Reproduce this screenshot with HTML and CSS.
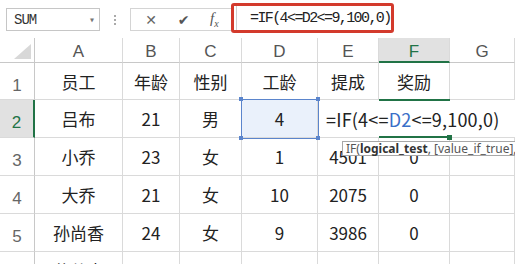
FILE: index.html
```html
<!DOCTYPE html>
<html lang="zh-CN">
<head>
  <meta charset="UTF-8">
  <title>奖励公式</title>
  <link rel="stylesheet" href="styles.css">
</head>
<body>
  <div class="toolbar">
    <div class="namebox"><span>SUM</span><span class="arrow">▾</span></div>
    <div class="grip"><i></i><i></i><i></i></div>
    <div class="fxbtns">
      <span class="cancel">✕</span>
      <span class="ok">✔</span>
      <span class="fx">f<sub>x</sub></span>
    </div>
    <div class="formula-box">=IF(4&lt;=D2&lt;=9,100,0)</div>
  </div>

  <div class="sheet">
    <!-- column headers -->
    <div class="corner"><div class="tri"></div></div>
    <div class="colhead">A</div>
    <div class="colhead">B</div>
    <div class="colhead">C</div>
    <div class="colhead">D</div>
    <div class="colhead">E</div>
    <div class="colhead active-col">F</div>
    <div class="colhead">G</div>

    <!-- row 1 -->
    <div class="rowhead">1</div>
    <div class="cell">员工</div>
    <div class="cell">年龄</div>
    <div class="cell">性别</div>
    <div class="cell">工龄</div>
    <div class="cell">提成</div>
    <div class="cell">奖励</div>
    <div class="cell"></div>

    <!-- row 2 -->
    <div class="rowhead active-row">2</div>
    <div class="cell">吕布</div>
    <div class="cell">21</div>
    <div class="cell">男</div>
    <div class="cell sel">4
      <i class="h tl"></i><i class="h tr"></i><i class="h bl"></i><i class="h br"></i>
    </div>
    <div class="cell editor">=IF(4&lt;=<span class="ref">D2</span>&lt;=9,100,0)</div>

    <!-- row 3 -->
    <div class="rowhead">3</div>
    <div class="cell">小乔</div>
    <div class="cell">23</div>
    <div class="cell">女</div>
    <div class="cell">1</div>
    <div class="cell">4501</div>
    <div class="cell">0</div>
    <div class="cell"></div>

    <!-- row 4 -->
    <div class="rowhead">4</div>
    <div class="cell">大乔</div>
    <div class="cell">21</div>
    <div class="cell">女</div>
    <div class="cell">10</div>
    <div class="cell">2075</div>
    <div class="cell">0</div>
    <div class="cell"></div>

    <!-- row 5 -->
    <div class="rowhead">5</div>
    <div class="cell">孙尚香</div>
    <div class="cell">24</div>
    <div class="cell">女</div>
    <div class="cell">9</div>
    <div class="cell">3986</div>
    <div class="cell">0</div>
    <div class="cell"></div>

    <!-- row 6 (cut off) -->
    <div class="rowhead">6</div>
    <div class="cell">黄蕉青</div>
    <div class="cell">25</div>
    <div class="cell">男</div>
    <div class="cell">5</div>
    <div class="cell">3000</div>
    <div class="cell">100</div>
    <div class="cell"></div>

    <div class="active-cell"><i class="fill"></i></div>
    <div class="tip">IF(<b>logical_test</b>, [value_if_true], [value_if_false])</div>
  </div>
</body>
</html>
```

FILE: styles.css
```css
:root {
  --grid: #dadada;
  --head-line: #c8c8c8;
  --green: #217346;
  --sel-blue: #5b85cc;
}

body {
  margin: 0;
  width: 515px;
  height: 264px;
  overflow: hidden;
  background: #fff;
  font-family: "Noto Sans CJK SC", sans-serif;
  color: #222;
}

/* formula toolbar */
.toolbar {
  height: 38px;
  display: flex;
  align-items: flex-start;
  position: relative;
}

.namebox {
  margin: 8px 0 0 6px;
  width: 94px;
  height: 23px;
  box-sizing: border-box;
  border: 1px solid #c6c6c6;
  display: flex;
  align-items: center;
  justify-content: space-between;
  padding: 0 5px 0 7px;
  font-family: "Liberation Mono", monospace;
  font-size: 14px;
  letter-spacing: -1px;
  color: #333;
}

.namebox .arrow {
  font-size: 10px;
  color: #777;
}

.grip {
  width: 30px;
  margin-top: 15px;
  display: flex;
  flex-direction: column;
  align-items: center;
  gap: 2px;
}

.grip i {
  width: 2px;
  height: 2px;
  background: #aaa;
}

.fxbtns {
  margin-top: 8px;
  width: 101px;
  height: 23px;
  box-sizing: border-box;
  border: 1px solid #d4d4d4;
  border-right: none;
  display: flex;
  align-items: center;
  justify-content: space-around;
  padding: 0 2px 0 4px;
  color: #666;
}

.fxbtns .cancel {
  font-size: 14px;
  font-family: "DejaVu Sans", sans-serif;
}

.fxbtns .ok {
  font-size: 14px;
  font-family: "DejaVu Sans", sans-serif;
  color: #555;
}

.fxbtns .fx {
  font-family: "Liberation Serif", serif;
  font-style: italic;
  font-size: 15px;
  color: #555;
}

.fxbtns .fx sub {
  font-size: 10px;
}

.formula-box {
  margin-top: 3px;
  width: 163px;
  height: 30px;
  box-sizing: border-box;
  border: 3px solid #d33a2c;
  border-radius: 3px;
  padding-left: 16px;
  display: flex;
  align-items: center;
  font-family: "Liberation Mono", monospace;
  font-size: 15px;
  letter-spacing: -1.6px;
  color: #222;
  white-space: nowrap;
  box-shadow: inset 2px 0 0 #fff, inset 3px 0 0 #cfcfcf;
}

/* grid */
.sheet {
  position: relative;
  display: grid;
  grid-template-columns: 35px 88px 57px 62px 76px 61px 71px 65px;
  grid-template-rows: 25px 37px 38px 38px 38px 38px 38px;
}

.sheet > div {
  box-sizing: border-box;
}

.corner {
  border-right: 1px solid var(--head-line);
  border-bottom: 1px solid var(--head-line);
  position: relative;
}

.corner .tri {
  position: absolute;
  right: 3px;
  bottom: 3px;
  width: 17px;
  height: 15px;
  background: #d8d8d8;
  clip-path: polygon(100% 0, 100% 100%, 0 100%);
}

.colhead {
  border-right: 1px solid var(--grid);
  border-bottom: 1px solid var(--head-line);
  display: flex;
  align-items: center;
  justify-content: center;
  padding-top: 4px;
  font-family: "Liberation Sans", sans-serif;
  font-size: 17px;
  color: #555;
}

.colhead.active-col {
  background: #e1e1e1;
  border-bottom: 2px solid var(--green);
  color: var(--green);
}

.rowhead {
  border-right: 1px solid var(--head-line);
  border-bottom: 1px solid var(--grid);
  display: flex;
  align-items: center;
  justify-content: center;
  padding-top: 9px;
  font-family: "Liberation Sans", sans-serif;
  font-size: 17px;
  color: #666;
}

.rowhead.active-row {
  background: #e1e1e1;
  border-right: 2px solid var(--green);
  color: var(--green);
}

.cell {
  border-right: 1px solid var(--grid);
  border-bottom: 1px solid var(--grid);
  display: flex;
  align-items: center;
  justify-content: center;
  font-size: 17px;
  white-space: nowrap;
}

.cell.sel {
  position: relative;
  background: #eaf1fb;
  outline: 1px solid var(--sel-blue);
}

.sel .h {
  position: absolute;
  width: 4px;
  height: 4px;
  background: var(--sel-blue);
}

.sel .tl { left: -3px; top: -3px; }
.sel .tr { right: -3px; top: -3px; }
.sel .bl { left: -3px; bottom: -3px; }
.sel .br { right: -3px; bottom: -3px; }

.cell.editor {
  grid-column: span 3;
  justify-content: flex-start;
  padding-left: 8px;
  background: #fff;
  border-right: none;
  font-size: 18px;
  letter-spacing: 0.2px;
}

.editor .ref {
  color: #3a6fc8;
}

/* active cell F2 */
.active-cell {
  position: absolute;
  left: 379px;
  top: 61px;
  width: 71px;
  height: 39px;
  border-top: 2px solid var(--green);
  border-bottom: 2px solid var(--green);
}

.active-cell .fill {
  position: absolute;
  right: -2px;
  bottom: -4px;
  width: 5px;
  height: 5px;
  background: var(--green);
}

/* function tooltip */
.tip {
  position: absolute;
  left: 342px;
  top: 103px;
  height: 15px;
  padding: 0 3px;
  border: 1px solid #a8a8a8;
  background: #fff;
  font-family: "Noto Sans", sans-serif;
  font-size: 12px;
  line-height: 13px;
  color: #555;
  white-space: nowrap;
}

.tip b {
  color: #333;
}
```
